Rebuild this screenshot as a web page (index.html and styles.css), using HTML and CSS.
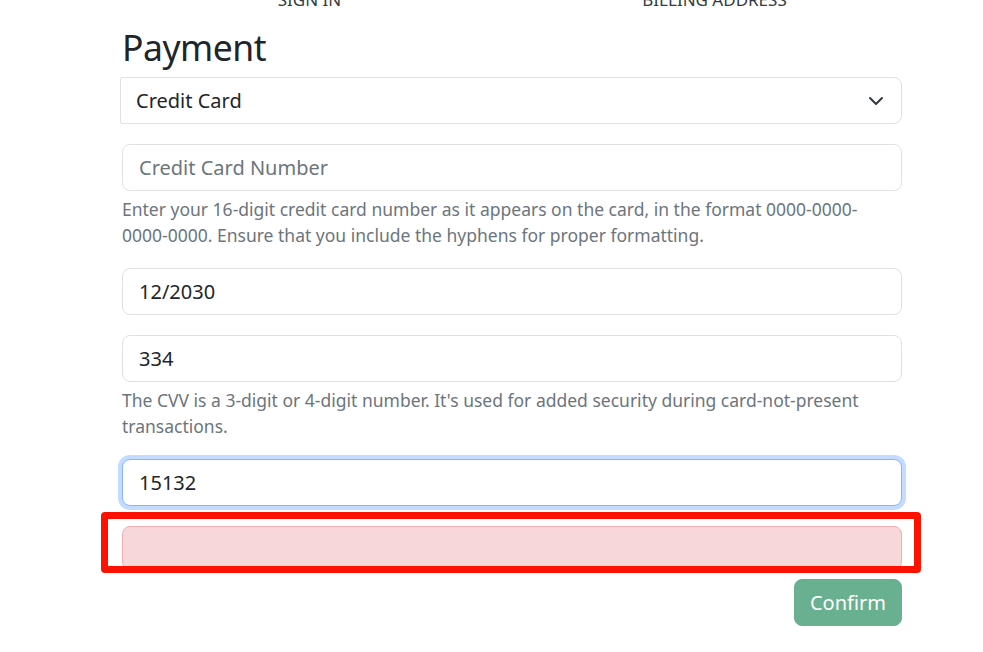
FILE: index.html
```
<!DOCTYPE html>
<html lang="en">
<head>
<meta charset="utf-8">
<title>Payment</title>
<link rel="stylesheet" href="styles.css">
</head>
<body>
<div class="container">
  <div class="steps">
    <div class="step">SIGN IN</div>
    <div class="step">BILLING ADDRESS</div>
  </div>
  <h1 class="title">Payment</h1>
  <form class="form">
    <div class="select">
      <span>Credit Card</span>
      <svg class="chev" width="16" height="16" viewBox="0 0 16 16"><path d="M2 5l6 6 6-6" fill="none" stroke="#343a40" stroke-width="2" stroke-linecap="round" stroke-linejoin="round"/></svg>
    </div>
    <div class="field">
      <div class="input placeholder">Credit Card Number</div>
      <div class="help">Enter your 16-digit credit card number as it appears on the card, in the format 0000-0000-0000-0000. Ensure that you include the hyphens for proper formatting.</div>
    </div>
    <div class="field">
      <div class="input">12/2030</div>
    </div>
    <div class="field">
      <div class="input">334</div>
      <div class="help">The CVV is a 3-digit or 4-digit number. It's used for added security during card-not-present transactions.</div>
    </div>
    <div class="field">
      <div class="input focus">15132</div>
    </div>
    <div class="alert-wrap">
      <div class="alert"></div>
      <div class="highlight"></div>
    </div>
    <div class="actions">
      <button type="button" class="btn">Confirm</button>
    </div>
  </form>
</div>
</body>
</html>
```
FILE: styles.css
```
* { box-sizing: border-box; }
html, body { margin: 0; padding: 0; background: #fff; }
body {
  font-family: "Noto Sans", "Open Sans", sans-serif;
  color: #212529;
  font-size: 16px;
}
.container {
  width: 780px;
  margin: 0 0 0 122px;
}
.steps {
  display: grid;
  grid-template-columns: 1fr 1fr;
  margin: -10px -15px 0 -15px;
  height: 20px;
}
.step {
  text-align: center;
  font-size: 17px;
  line-height: 20px;
  color: #343a40;
}
.title {
  font-size: 35.5px;
  letter-spacing: -0.5px;
  font-weight: 400;
  line-height: 48px;
  margin: 13px 0 6px 0;
}
.form { display: flex; flex-direction: column; gap: 20px; }
.select {
  display: flex;
  align-items: center;
  justify-content: space-between;
  height: 47px;
  margin-left: -2px;
  padding: 0 17px 0 15px;
  border: 1px solid #dee2e6;
  border-radius: 2px 8px 8px 2px;
  font-size: 20px;
}
.chev { display: block; }
.input {
  height: 47px;
  padding: 0 16px;
  display: flex;
  align-items: center;
  border: 1px solid #dee2e6;
  border-radius: 8px;
  font-size: 20px;
  background: #fff;
}
.placeholder { color: #6c757d; }
.focus {
  border-color: #86b7fe;
  box-shadow: 0 0 0 4px rgba(13, 110, 253, .25);
}
.help {
  margin-top: 5px;
  font-size: 17.5px;
  line-height: 26px;
  color: #6c757d;
}
.alert-wrap { position: relative; }
.alert {
  height: 44px;
  background: #f8d7da;
  border: 1px solid #f1aeb5;
  border-radius: 8px;
}
.highlight {
  position: absolute;
  left: -21px;
  right: -19px;
  top: -14px;
  height: 61px;
  border: 7px solid #ff1100;
  border-radius: 4px;
}
.actions { display: flex; justify-content: flex-end; margin-top: -11px; }
.btn {
  font-family: inherit;
  font-size: 20px;
  color: #fff;
  background: #198754;
  opacity: .65;
  border: 1px solid #198754;
  border-radius: 8px;
  height: 47px;
  padding: 0 15px;
}
```
